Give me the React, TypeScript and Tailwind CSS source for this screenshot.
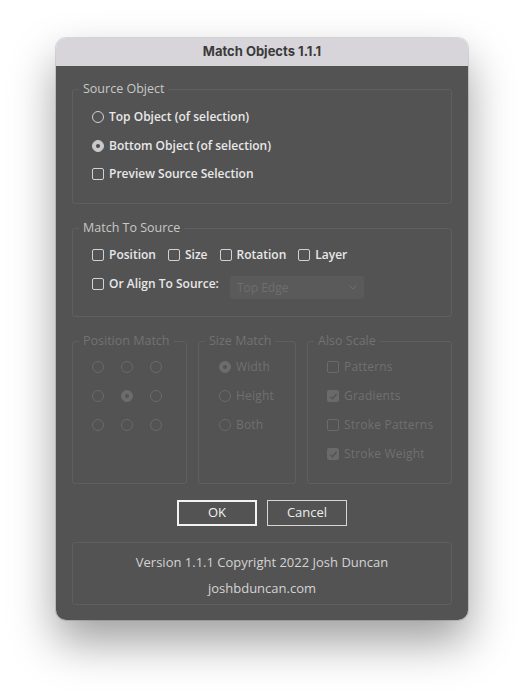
import React from "react";

const font = { fontFamily: '"Open Sans", "DejaVu Sans", sans-serif' };

const Radio = ({ checked = false, disabled = false }: { checked?: boolean; disabled?: boolean }) => {
  if (disabled) {
    return checked ? (
      <span className="w-[12px] h-[12px] rounded-full bg-[#6c6c6c] border border-[#6c6c6c] flex items-center justify-center shrink-0">
        <span className="w-[4px] h-[4px] rounded-full bg-[#545454]" />
      </span>
    ) : (
      <span className="w-[12px] h-[12px] rounded-full border border-[#6a6a6a] shrink-0" />
    );
  }
  return checked ? (
    <span className="w-[12px] h-[12px] rounded-full bg-[#c9c9c9] border border-[#c9c9c9] flex items-center justify-center shrink-0">
      <span className="w-[4px] h-[4px] rounded-full bg-[#4b4b4b]" />
    </span>
  ) : (
    <span className="w-[12px] h-[12px] rounded-full border border-[#d2d2d2] shrink-0" />
  );
};

const Check = ({ checked = false, disabled = false }: { checked?: boolean; disabled?: boolean }) => {
  if (disabled) {
    return checked ? (
      <span className="w-[12px] h-[12px] rounded-[2px] bg-[#6a6a6a] flex items-center justify-center shrink-0">
        <svg width="9" height="9" viewBox="0 0 9 9" fill="none">
          <path d="M1.5 4.8 L3.6 6.8 L7.5 2" stroke="#535353" strokeWidth="1.4" />
        </svg>
      </span>
    ) : (
      <span className="w-[12px] h-[12px] rounded-[2px] border border-[#6a6a6a] shrink-0" />
    );
  }
  return <span className="w-[12px] h-[12px] rounded-[2px] border border-[#d2d2d2] shrink-0" />;
};

const Item = ({ children, label, disabled = false }: { children: React.ReactNode; label: string; disabled?: boolean }) => (
  <div className="flex items-center gap-[5px] h-[20px]">
    {children}
    <span
      className={
        disabled
          ? "text-[12px] leading-[20px] text-[#707070] tracking-[0.2px] whitespace-nowrap"
          : "text-[12px] leading-[20px] text-[#e8e8e8] font-semibold whitespace-nowrap"
      }
    >
      {label}
    </span>
  </div>
);

const Panel = ({
  title,
  disabled = false,
  className,
  children,
}: {
  title: string;
  disabled?: boolean;
  className: string;
  children: React.ReactNode;
}) => (
  <fieldset className={`border border-[#5f5f5f] rounded-[3px] p-0 m-0 min-w-0 ${className}`}>
    <legend
      className={
        disabled
          ? "ml-[6px] px-[4px] text-[12.5px] leading-[16px] text-[#727272] whitespace-nowrap"
          : "ml-[6px] px-[4px] text-[12.5px] leading-[16px] text-[#c8c8c8] whitespace-nowrap"
      }
    >
      {title}
    </legend>
    {children}
  </fieldset>
);

export default function App() {
  return (
    <div className="w-[524px] h-[694px] bg-white overflow-hidden" style={font}>
      <div className="ml-[56px] mt-[38px] w-[412px] rounded-[10px] overflow-hidden shadow-[0_22px_45px_rgba(0,0,0,0.38),0_0_0_1px_rgba(0,0,0,0.12)]">
        <div className="h-[28px] bg-[#d7d5d9] flex items-center justify-center">
          <span className="text-[13px] font-bold text-[#3b3b3b]" style={{ fontFamily: "Inter, sans-serif" }}>
            Match Objects 1.1.1
          </span>
        </div>
        <div className="bg-[#535353] flex flex-col px-[16px] pt-[15px] pb-[15px] gap-[16px]">
          <Panel title="Source Object" className="">
            <div className="flex flex-col gap-[8.5px] pt-[10px] pb-[19px] pl-[19px]">
              <Item label="Top Object (of selection)">
                <Radio />
              </Item>
              <Item label="Bottom Object (of selection)">
                <Radio checked />
              </Item>
              <Item label="Preview Source Selection">
                <Check />
              </Item>
            </div>
          </Panel>

          <Panel title="Match To Source" className="">
            <div className="flex flex-col gap-[9px] pt-[9px] pb-[17px] pl-[19px]">
              <div className="flex items-center gap-[12px]">
                <Item label="Position">
                  <Check />
                </Item>
                <Item label="Size">
                  <Check />
                </Item>
                <Item label="Rotation">
                  <Check />
                </Item>
                <Item label="Layer">
                  <Check />
                </Item>
              </div>
              <div className="flex items-start gap-[11px]">
                <Item label="Or Align To Source:">
                  <Check />
                </Item>
                <div className="mt-[2px] w-[134px] h-[23px] rounded-[3px] bg-[#5a5a5a] flex items-center justify-between pl-[7px] pr-[7px]">
                  <span className="text-[12px] text-[#6e6e6e]">Top Edge</span>
                  <svg width="8" height="5" viewBox="0 0 8 5" fill="none">
                    <path d="M0.5 0.5 L4 4 L7.5 0.5" stroke="#6e6e6e" strokeWidth="1" />
                  </svg>
                </div>
              </div>
            </div>
          </Panel>

          <div className="flex items-stretch gap-[11px]">
            <Panel title="Position Match" disabled className="w-[115px]">
              <div className="grid grid-cols-[12px_12px_12px] gap-x-[17px] gap-y-[17px] pt-[12px] pb-[19px] pl-[19px]">
                {[0, 1, 2, 3, 4, 5, 6, 7, 8].map((i) => (
                  <Radio key={i} disabled checked={i === 4} />
                ))}
              </div>
            </Panel>
            <Panel title="Size Match" disabled className="w-[98px]">
              <div className="flex flex-col gap-[9px] pt-[8px] pb-[19px] pl-[20px]">
                <Item label="Width" disabled>
                  <Radio disabled checked />
                </Item>
                <Item label="Height" disabled>
                  <Radio disabled />
                </Item>
                <Item label="Both" disabled>
                  <Radio disabled />
                </Item>
              </div>
            </Panel>
            <Panel title="Also Scale" disabled className="flex-1">
              <div className="flex flex-col gap-[9px] pt-[8px] pb-[19px] pl-[19px]">
                <Item label="Patterns" disabled>
                  <Check disabled />
                </Item>
                <Item label="Gradients" disabled>
                  <Check disabled checked />
                </Item>
                <Item label="Stroke Patterns" disabled>
                  <Check disabled />
                </Item>
                <Item label="Stroke Weight" disabled>
                  <Check disabled checked />
                </Item>
              </div>
            </Panel>
          </div>

          <div className="flex justify-center gap-[10px]">
            <button className="w-[80px] h-[26px] border-2 border-[#f2f2f2] text-[13px] text-[#f2f2f2] font-medium">
              OK
            </button>
            <button className="w-[80px] h-[26px] border border-[#d6d6d6] text-[13px] text-[#ececec] font-medium">
              Cancel
            </button>
          </div>

          <div className="border border-[#5f5f5f] rounded-[3px] flex flex-col items-center pt-[9px] pb-[6px] gap-[6px]">
            <span className="text-[13px] leading-[20px] text-[#d4d4d4]">
              Version 1.1.1 Copyright 2022 Josh Duncan
            </span>
            <span className="text-[13px] leading-[20px] text-[#d4d4d4]">joshbduncan.com</span>
          </div>
        </div>
      </div>
    </div>
  );
}
